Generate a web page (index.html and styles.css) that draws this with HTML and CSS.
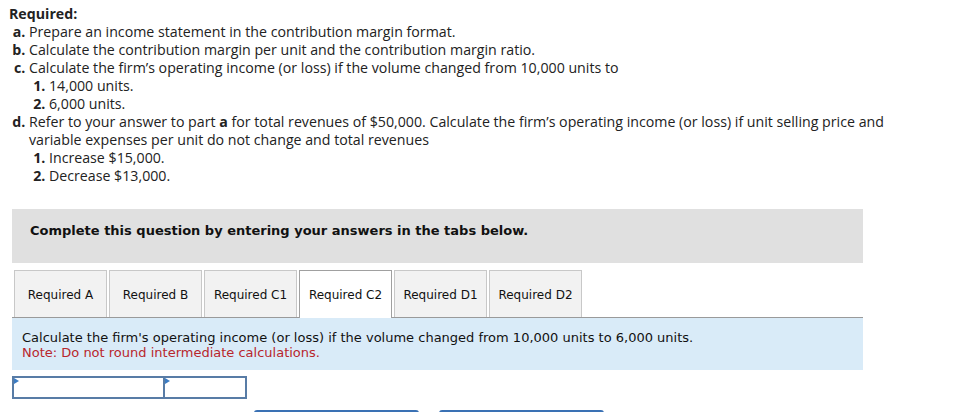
FILE: index.html
```html
<!DOCTYPE html>
<html lang="en">
<head>
<meta charset="utf-8">
<title>Required</title>
<link rel="stylesheet" href="styles.css">
</head>
<body>
<div class="intro">
  <div class="req-title">Required:</div>
  <ol class="parts">
    <li>Prepare an income statement in the contribution margin format.</li>
    <li>Calculate the contribution margin per unit and the contribution margin ratio.</li>
    <li>Calculate the firm’s operating income (or loss) if the volume changed from 10,000 units to
      <ol class="sub">
        <li>14,000 units.</li>
        <li>6,000 units.</li>
      </ol>
    </li>
    <li>Refer to your answer to part <b>a</b> for total revenues of $50,000. Calculate the firm’s operating income (or loss) if unit selling price and variable expenses per unit do not change and total revenues
      <ol class="sub">
        <li>Increase $15,000.</li>
        <li>Decrease $13,000.</li>
      </ol>
    </li>
  </ol>
</div>
<div class="work">
  <div class="banner">Complete this question by entering your answers in the tabs below.</div>
  <div class="tabs">
    <div class="tab">Required A</div>
    <div class="tab">Required B</div>
    <div class="tab">Required C1</div>
    <div class="tab active">Required C2</div>
    <div class="tab">Required D1</div>
    <div class="tab">Required D2</div>
  </div>
  <div class="panel">
    <div class="panel-line">Calculate the firm's operating income (or loss) if the volume changed from 10,000 units to 6,000 units.</div>
    <div class="panel-note">Note: Do not round intermediate calculations.</div>
  </div>
  <div class="inputs">
    <div class="cell cell-wide"><span class="flag"></span></div>
    <div class="cell cell-narrow"><span class="flag"></span></div>
  </div>
  <div class="buttons">
    <div class="btn"></div>
    <div class="btn"></div>
  </div>
</div>
</body>
</html>
```
FILE: styles.css
```css
html, body {
  margin: 0;
  padding: 0;
  background: #ffffff;
}
body {
  overflow: hidden;
  height: 412px;
}
.intro {
  width: 920px;
  padding: 5px 0 0 9px;
  font-family: "Open Sans", Lato, sans-serif;
  font-size: 14.2px;
  line-height: 18px;
  color: #222222;
}
.req-title {
  font-weight: bold;
}
.parts {
  margin: 0;
  padding-left: 20px;
  list-style-type: lower-alpha;
}
.parts li::marker {
  font-weight: bold;
}
.sub {
  margin: 0;
  padding-left: 20px;
  list-style-type: decimal;
}
.work {
  margin: 24px 0 0 12px;
  width: 851px;
  font-family: "DejaVu Sans", Verdana, sans-serif;
  font-size: 12px;
  color: #111111;
}
.banner {
  box-sizing: border-box;
  height: 54px;
  background: #e0e0e0;
  padding: 14px 18px;
  font-weight: bold;
  font-size: 13px;
  line-height: 16px;
  color: #111111;
}
.tabs {
  display: flex;
  align-items: flex-start;
  gap: 2px;
  margin-top: 7px;
  padding-left: 2px;
  border-bottom: 1px solid #9a9a9a;
}
.tab {
  box-sizing: border-box;
  width: 93px;
  height: 47px;
  border: 1px solid #c8c8c8;
  border-bottom: none;
  background: #f2f2f2;
  display: flex;
  align-items: center;
  justify-content: center;
  padding-top: 2px;
  white-space: nowrap;
}
.tab.active {
  height: 48px;
  margin-bottom: -1px;
  padding-bottom: 1px;
  background: #ffffff;
  border-color: #a0a0a0;
}
.panel {
  box-sizing: border-box;
  height: 52px;
  background: #d9ebf8;
  padding: 12px 10px 0 10px;
  font-size: 13px;
  line-height: 15px;
}
.panel-note {
  color: #b8262c;
}
.inputs {
  display: flex;
  margin-top: 6px;
}
.cell {
  position: relative;
  box-sizing: border-box;
  height: 23px;
  border: 2px solid #587ca6;
  background: #ffffff;
}
.cell-wide {
  width: 153px;
}
.cell-narrow {
  width: 82px;
  border-left: none;
}
.flag {
  position: absolute;
  left: 0;
  top: 0;
  width: 0;
  height: 0;
  border-top: 3px solid transparent;
  border-bottom: 3px solid transparent;
  border-left: 5px solid #3b7cc4;
}
.buttons {
  display: flex;
  gap: 20px;
  margin-top: 11px;
  padding-left: 242px;
}
.btn {
  width: 165px;
  height: 30px;
  background: #3a71b4;
  border-radius: 3px;
}
```
